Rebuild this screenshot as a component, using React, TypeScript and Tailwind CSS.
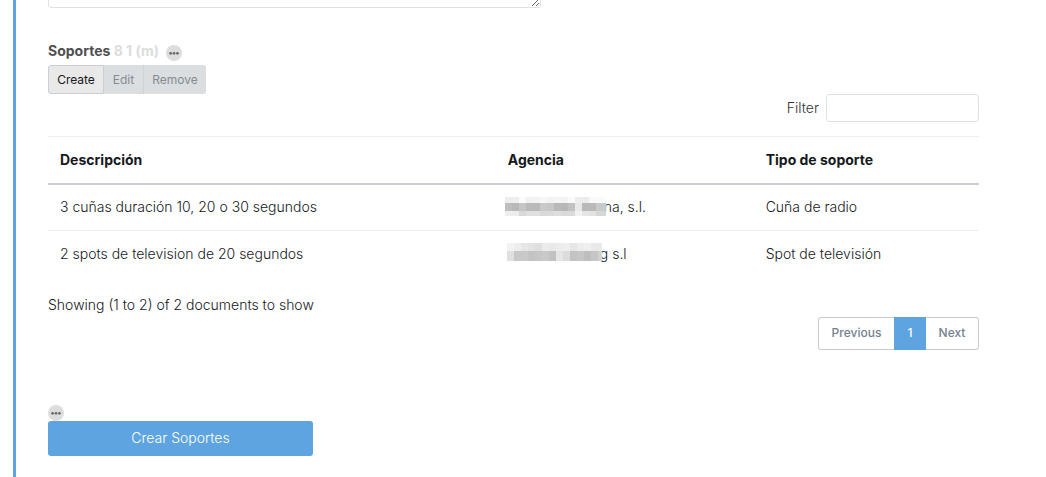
import { useState } from 'react';

type Mosaic = {
  width: number;
  height: number;
  offset: number;
  rows: { y: number; h: number; shades: string[] }[];
};

type Soporte = {
  descripcion: string;
  mosaic: Mosaic;
  agencia: string;
  tipo: string;
};

const soportes: Soporte[] = [
  {
    descripcion: '3 cuñas duración 10, 20 o 30 segundos',
    mosaic: {
      width: 101,
      height: 20,
      offset: 0,
      rows: [
        { y: 0, h: 6, shades: ['#eeeeee', '#eeeeee', '#fbfbfb', '#f1f1f1', '#f3f3f3', '#f7f7f7', '#f3f3f3', '#f5f5f5', '#f3f3f3', '#fafafa', '#ededed', '#ebebeb', '#f9f9f9', '#f9f9f9', '#fbfbfb'] },
        { y: 6, h: 8, shades: ['#bfbfbf', '#b9b9b9', '#c6c6c6', '#bababa', '#b9b9b9', '#c9c9c9', '#c6c6c6', '#b9b9b9', '#b7b7b7', '#c2c2c2', '#e9e9e9', '#b9b9b9', '#b9b9b9', '#c9c9c9', '#c9c9c9'] },
        { y: 14, h: 5, shades: ['#efefef', '#ededed', '#d8d8d8', '#dedede', '#dfdfdf', '#d9d9d9', '#dadada', '#dedede', '#dadada', '#dadada', '#f1f1f1', '#e6e6e6', '#e3e3e3', '#d6d6d6', '#d6d6d6'] },
      ],
    },
    agencia: 'na, s.l.',
    tipo: 'Cuña de radio',
  },
  {
    descripcion: '2 spots de television de 20 segundos',
    mosaic: {
      width: 97,
      height: 22,
      offset: 2,
      rows: [
        { y: 0, h: 8, shades: ['#f3f3f3', '#ededed', '#e6e6e6', '#e3e3e3', '#dfdfdf', '#ebebeb', '#e9e9e9', '#ececec', '#eeeeee', '#e6e6e6', '#ededed', '#efefef', '#e9e9e9', '#e9e9e9'] },
        { y: 8, h: 10, shades: ['#e0e0e0', '#c8c8c8', '#c9c9c9', '#c3c3c3', '#c6c6c6', '#c9c9c9', '#c2c2c2', '#e6e6e6', '#dcdcdc', '#c3c3c3', '#c6c6c6', '#bebebe', '#c6c6c6', '#d3d3d3'] },
      ],
    },
    agencia: 'g s.l',
    tipo: 'Spot de televisión',
  },
];

function MoreBadge() {
  return (
    <button type="button" aria-label="More" className="block h-4 w-4 rounded-full bg-[#dddddd]">
      <svg viewBox="0 0 16 16" className="block h-4 w-4" fill="#6b6b6b">
        <circle cx="4.6" cy="8.3" r="1.4" />
        <circle cx="8" cy="8.3" r="1.4" />
        <circle cx="11.4" cy="8.3" r="1.4" />
      </svg>
    </button>
  );
}

function HiddenName({ mosaic }: { mosaic: Mosaic }) {
  return (
    <svg
      width={mosaic.width}
      height={mosaic.height}
      viewBox={`0 0 ${mosaic.width} ${mosaic.height}`}
      className="relative -mr-[2px] -ml-[3px] block shrink-0"
      shapeRendering="crispEdges"
      aria-hidden="true"
    >
      {mosaic.rows.map((row) =>
        row.shades.map((shade, i) => (
          <rect key={`${row.y}-${i}`} x={mosaic.offset + i * 7} y={row.y} width="7" height={row.h} fill={shade} />
        ))
      )}
    </svg>
  );
}

export default function App() {
  const [filter, setFilter] = useState('');

  return (
    <div className="ml-[13px] min-h-screen overflow-hidden border-l-3 border-[#5ea4e0] bg-white pr-[67px] pb-5 pl-8 font-[Inter,sans-serif] text-sm leading-[22px] font-light text-[#16191c]">
      <textarea
        aria-label="Observaciones"
        className="-mt-14 block h-16 w-[493px] max-w-full resize rounded-[3px] border border-[#dee2e6]"
      />

      <div className="mt-8 flex items-center gap-[7px]">
        <h2 className="font-bold text-[#4f4f4f]">
          Soportes <span className="text-[#dddddd]">8 1 (m)</span>
        </h2>
        <div className="mt-1">
          <MoreBadge />
        </div>
      </div>

      <div className="mt-[3px] flex h-[29px] text-xs font-normal">
        <button type="button" className="w-14 rounded-l-[3px] border border-[#c8ced3] bg-[#e9e9e9]">
          Create
        </button>
        <button type="button" disabled className="w-[39px] bg-[#dadee1] text-[#868b90]">
          Edit
        </button>
        <button type="button" disabled className="w-[63px] rounded-r-[3px] border-l border-[#ced3d7] bg-[#dadee1] text-[#868b90]">
          Remove
        </button>
      </div>

      <div className="flex items-center justify-end gap-[7px]">
        <label htmlFor="filter" className="text-[#333333]">Filter</label>
        <input
          id="filter"
          type="text"
          value={filter}
          onChange={(e) => setFilter(e.target.value)}
          className="h-7 w-[153px] rounded-[3px] border border-[#dee2e6] px-2 focus:outline-none"
        />
      </div>

      <table className="mt-[14px] w-full table-fixed border-collapse text-left">
        <colgroup>
          <col className="w-[48.1%]" />
          <col className="w-[27.7%]" />
          <col />
        </colgroup>
        <thead>
          <tr className="h-[47px] border-t border-b-2 border-t-[#ebedef] border-b-[#c8ced3]">
            <th className="px-3 font-bold">Descripción</th>
            <th className="px-3 font-bold">Agencia</th>
            <th className="px-3 font-bold">Tipo de soporte</th>
          </tr>
        </thead>
        <tbody>
          {soportes.map((s) => (
            <tr key={s.descripcion} className="h-[47px] border-b border-[#ebedef] last:border-b-0">
              <td className="px-3">{s.descripcion}</td>
              <td className="px-3">
                <div className="flex items-center">
                  <HiddenName mosaic={s.mosaic} />
                  {s.agencia}
                </div>
              </td>
              <td className="px-3">{s.tipo}</td>
            </tr>
          ))}
        </tbody>
      </table>

      <p className="mt-4">Showing (1 to 2) of 2 documents to show</p>

      <nav aria-label="Pagination" className="mt-px flex h-[33px] justify-end text-xs font-medium text-[#73818f]">
        <button type="button" className="w-[76px] rounded-l-[3px] border border-r-0 border-[#c8ced3]">Previous</button>
        <button type="button" aria-current="page" className="w-8 bg-[#5ea4e0] text-white">1</button>
        <button type="button" className="w-[53px] rounded-r-[3px] border border-l-0 border-[#c8ced3]">Next</button>
      </nav>

      <div className="mt-[55px]">
        <MoreBadge />
        <button type="button" className="block h-[35px] w-[265px] rounded-[3px] bg-[#5ea4e0] text-white">
          Crear Soportes
        </button>
      </div>
    </div>
  );
}
